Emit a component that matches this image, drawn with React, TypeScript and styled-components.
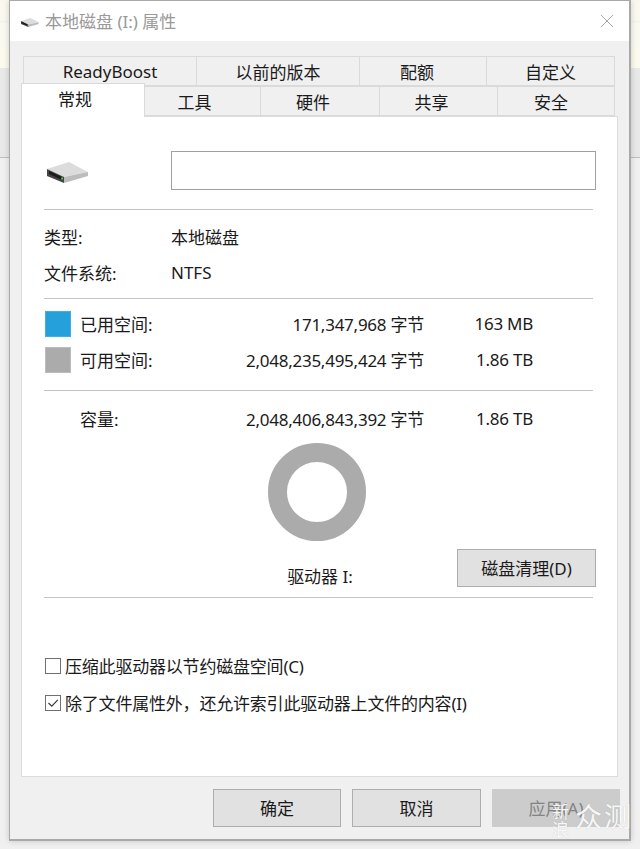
import React from 'react'
import styled, { createGlobalStyle } from 'styled-components'

const GlobalStyle = createGlobalStyle`
  html, body {
    margin: 0;
    padding: 0;
  }
  body {
    width: 640px;
    height: 849px;
    overflow: hidden;
    font-family: "Noto Sans", "Noto Sans CJK SC", sans-serif;
    font-size: 17px;
    color: #1a1a1a;
    background: linear-gradient(
      to bottom,
      #fbf9ef 0, #fbf9ef 21px,
      #efefe8 21px, #f9f8f1 23px, #f9f8f1 47px,
      #fcfaec 48px, #fcfaec 68px,
      #e8e8e8 68px, #e8e8e8 157px,
      #bdbdbd 157px, #bdbdbd 158px,
      #f0f0f0 158px, #f0f0f0 100%
    );
  }
`

const Page = styled.div`
  position: relative;
  width: 640px;
  height: 849px;
`

const Window = styled.div`
  box-sizing: border-box;
  margin-left: 9px;
  width: 622px;
  height: 841px;
  display: flex;
  flex-direction: column;
  background: #f0f0f0;
  border: 1px solid #a9a9a9;
  border-width: 1px 2px 2px 1px;
  box-shadow: 0 0 6px rgba(0, 0, 0, 0.18);
`

const TitleBar = styled.div`
  height: 40px;
  flex: none;
  display: flex;
  align-items: center;
  background: #fff;
  padding: 0 15px 0 10px;
`

const TitleIconSlot = styled.div`
  margin-top: 3px;
  flex: none;
`

const Title = styled.span`
  margin-left: 5px;
  flex: 1;
  color: #999;
  line-height: 42px;
  padding-top: 2px;
`

const Content = styled.div`
  flex: 1;
  display: flex;
  flex-direction: column;
  padding: 15px 11px 0 11px;
`

const TabRow = styled.div<{ $columns: string }>`
  display: grid;
  grid-template-columns: ${(p) => p.$columns};
  height: 30px;
  flex: none;
`

const Tab = styled.div<{ $active?: boolean; $shift?: number }>`
  box-sizing: border-box;
  display: flex;
  align-items: center;
  justify-content: center;
  white-space: nowrap;
  background: ${(p) => (p.$active ? '#fff' : '#f0f0f0')};
  border: 1px solid #dadada;
  border-left-width: ${(p) => (p.$active ? '1px' : '0')};
  border-bottom-width: ${(p) => (p.$active ? '0' : '1px')};
  height: ${(p) => (p.$active ? '34px' : '30px')};
  margin-top: ${(p) => (p.$active ? '-3px' : '0')};
  padding-bottom: ${(p) => (p.$active ? '4px' : '0')};
  padding-right: ${(p) => (p.$shift ?? 0) * 2}px;
  position: ${(p) => (p.$active ? 'relative' : 'static')};
  z-index: ${(p) => (p.$active ? 2 : 0)};
  &:first-child {
    border-left-width: 1px;
  }
`

const UpperRow = styled(TabRow)`
  margin-left: 2px;
  margin-right: 3px;
`

const LowerRow = styled(TabRow)`
  margin-right: 3px;
`

const Panel = styled.div`
  box-sizing: border-box;
  height: 661px;
  flex: none;
  background: #fff;
  border: 1px solid #dcdcdc;
  padding: 0 24px 0 22px;
  display: flex;
  flex-direction: column;
`

const Section = styled.div<{ $height: number; $top: number }>`
  box-sizing: border-box;
  height: ${(p) => p.$height}px;
  padding-top: ${(p) => p.$top}px;
  border-bottom: 1px solid #c4c4c4;
  flex: none;
`

const Head = styled(Section)`
  display: flex;
  align-items: flex-start;
`

const DriveSlot = styled.div`
  width: 124px;
  margin-left: 3px;
  margin-top: 11px;
  flex: none;
`

const NameInput = styled.div`
  box-sizing: border-box;
  width: 425px;
  height: 39px;
  flex: none;
  background: #fff;
  border: 1px solid #a0a0a0;
`

const InfoRow = styled.div`
  display: flex;
  align-items: center;
  height: 36px;
  padding-bottom: 2px;
  box-sizing: border-box;
`

const InfoLabel = styled.span`
  width: 127px;
  flex: none;
`

const UsageRow = styled.div`
  display: grid;
  grid-template-columns: 35px 100px 244px 109px;
  align-items: center;
  height: 36px;
  margin-left: 1px;
`

const Swatch = styled.span<{ $color: string; $edge: string }>`
  width: 26px;
  height: 26px;
  background: ${(p) => p.$color};
  border: 1px solid ${(p) => p.$edge};
  box-sizing: border-box;
`

const UsageLabel = styled.span`
  margin-bottom: 2px;
  white-space: nowrap;
`

const Numeric = styled(UsageLabel)`
  text-align: right;
  letter-spacing: -0.25px;
`

const ChartRow = styled.div`
  display: flex;
  align-items: flex-end;
  margin-left: 224px;
  margin-top: 6px;
`

const ChartColumn = styled.div`
  width: 98px;
  flex: none;
  display: flex;
  flex-direction: column;
  align-items: center;
  gap: 24px;
`

const DriveLabel = styled.span`
  line-height: 24px;
  white-space: nowrap;
  margin-left: 6px;
`

const Button = styled.div<{ $width: number; $disabled?: boolean }>`
  box-sizing: border-box;
  width: ${(p) => p.$width}px;
  height: 38px;
  flex: none;
  display: flex;
  align-items: center;
  justify-content: center;
  white-space: nowrap;
  padding-bottom: 2px;
  background: ${(p) => (p.$disabled ? '#cccccc' : '#e1e1e1')};
  border: 1px solid ${(p) => (p.$disabled ? '#cccccc' : '#adadad')};
  color: ${(p) => (p.$disabled ? '#838383' : '#1a1a1a')};
`

const CleanButton = styled(Button)`
  margin-left: 91px;
  margin-bottom: 2px;
`

const Options = styled.div`
  padding-top: 56px;
  display: flex;
  flex-direction: column;
  gap: 13px;
`

const CheckRow = styled.div`
  display: flex;
  align-items: center;
  height: 24px;
  margin-left: 1px;
  gap: 4px;
  white-space: nowrap;
  letter-spacing: -0.2px;
`

const CheckLabel = styled.span`
  margin-bottom: 2px;
`

const CheckBox = styled.span`
  box-sizing: border-box;
  width: 16px;
  height: 16px;
  flex: none;
  display: flex;
  align-items: center;
  justify-content: center;
  background: #fff;
  border: 1px solid #707070;
`

const Footer = styled.div`
  display: flex;
  gap: 11px;
  margin-top: 12px;
  margin-left: 192px;
`

const Watermark = styled.div`
  position: absolute;
  left: 552px;
  top: 803px;
  display: flex;
  gap: 6px;
  color: rgba(255, 255, 255, 0.92);
  text-shadow: 0 0 1px rgba(120, 120, 120, 0.35);
`

const WatermarkSmall = styled.div`
  width: 17px;
  font-size: 17px;
  line-height: 18px;
`

const WatermarkBig = styled.div`
  font-size: 27px;
  line-height: 28px;
  letter-spacing: 2px;
  white-space: nowrap;
`

const IconSvg = styled.svg`
  display: block;
`

const SoftIconSvg = styled(IconSvg)`
  filter: blur(0.5px);
`

const DriveIcon = ({ width, height }: { width: number; height: number }) => (
  <SoftIconSvg width={width} height={height} viewBox="0 0 42 21">
    <polygon points="0,7 22,0 41,10 17,15" fill="#dcdcdc" />
    <polygon points="17,15 41,10 41,14 17,21" fill="#bcbcbc" />
    <polygon points="0,7 17,15 17,21 0,14" fill="#444" />
    <polygon points="2,9 15,15 15,18 2,12" fill="#1c1c1c" />
    <rect x="14" y="15.5" width="2" height="2" fill="#3ec43e" />
  </SoftIconSvg>
)

const CloseIcon = () => (
  <IconSvg width="14" height="14" viewBox="0 0 14 14">
    <path d="M1 1 L13 13 M13 1 L1 13" stroke="#a8a8a8" strokeWidth="1" fill="none" />
  </IconSvg>
)

const CheckMark = () => (
  <IconSvg width="12" height="12" viewBox="0 0 12 12">
    <path d="M1.5 6 L4.8 9.2 L10.8 2.8" stroke="#333" strokeWidth="1.1" fill="none" />
  </IconSvg>
)

const Donut = () => (
  <IconSvg width="98" height="98" viewBox="0 0 98 98">
    <circle cx="49" cy="49" r="39.5" stroke="#ababab" strokeWidth="19" fill="none" />
  </IconSvg>
)

const upperTabs = [
  { label: 'ReadyBoost', shift: 0 },
  { label: '以前的版本', shift: 0 },
  { label: '配额', shift: 6 },
  { label: '自定义', shift: 0 },
]

const lowerTabs = [
  { label: '常规', shift: 8 },
  { label: '工具', shift: 8 },
  { label: '硬件', shift: 7 },
  { label: '共享', shift: 7 },
  { label: '安全', shift: 5 },
]

const usage = [
  { color: '#26a0da', edge: '#3fb0e4', label: '已用空间:', bytes: '171,347,968 字节', size: '163 MB' },
  { color: '#ababab', edge: '#bdbdbd', label: '可用空间:', bytes: '2,048,235,495,424 字节', size: '1.86 TB' },
]

const indexOption = '除了文件属性外\uFF0C还允许索引此驱动器上文件的内容(I)'

const App: React.FC = () => {
  return (
    <Page>
      <GlobalStyle />
      <Window>
        <TitleBar>
          <TitleIconSlot>
            <DriveIcon width={20} height={9} />
          </TitleIconSlot>
          <Title>本地磁盘 (I:) 属性</Title>
          <CloseIcon />
        </TitleBar>
        <Content>
          <UpperRow $columns="174px 163px 127px 128px">
            {upperTabs.map((t) => (
              <Tab key={t.label} $shift={t.shift}>{t.label}</Tab>
            ))}
          </UpperRow>
          <LowerRow $columns="124px 116px 119px 118px 117px">
            {lowerTabs.map((t, i) => (
              <Tab key={t.label} $active={i === 0} $shift={t.shift}>
                {t.label}
              </Tab>
            ))}
          </LowerRow>
          <Panel>
            <Head $height={93} $top={34}>
              <DriveSlot>
                <DriveIcon width={42} height={21} />
              </DriveSlot>
              <NameInput />
            </Head>
            <Section $height={89} $top={9}>
              <InfoRow>
                <InfoLabel>类型:</InfoLabel>
                <span>本地磁盘</span>
              </InfoRow>
              <InfoRow>
                <InfoLabel>文件系统:</InfoLabel>
                <span>NTFS</span>
              </InfoRow>
            </Section>
            <Section $height={92} $top={7}>
              {usage.map((u) => (
                <UsageRow key={u.label}>
                  <Swatch $color={u.color} $edge={u.edge} />
                  <UsageLabel>{u.label}</UsageLabel>
                  <Numeric>{u.bytes}</Numeric>
                  <Numeric>{u.size}</Numeric>
                </UsageRow>
              ))}
            </Section>
            <Section $height={207} $top={10}>
              <UsageRow>
                <span />
                <UsageLabel>容量:</UsageLabel>
                <Numeric>2,048,406,843,392 字节</Numeric>
                <Numeric>1.86 TB</Numeric>
              </UsageRow>
              <ChartRow>
                <ChartColumn>
                  <Donut />
                  <DriveLabel>驱动器 I:</DriveLabel>
                </ChartColumn>
                <CleanButton $width={139}>磁盘清理(D)</CleanButton>
              </ChartRow>
            </Section>
            <Options>
              <CheckRow>
                <CheckBox />
                <CheckLabel>压缩此驱动器以节约磁盘空间(C)</CheckLabel>
              </CheckRow>
              <CheckRow>
                <CheckBox>
                  <CheckMark />
                </CheckBox>
                <CheckLabel>{indexOption}</CheckLabel>
              </CheckRow>
            </Options>
          </Panel>
          <Footer>
            <Button $width={128}>确定</Button>
            <Button $width={129}>取消</Button>
            <Button $width={128} $disabled>应用(A)</Button>
          </Footer>
        </Content>
      </Window>
      <Watermark>
        <WatermarkSmall>新<br />浪</WatermarkSmall>
        <WatermarkBig>众测</WatermarkBig>
      </Watermark>
    </Page>
  )
}

export default App
